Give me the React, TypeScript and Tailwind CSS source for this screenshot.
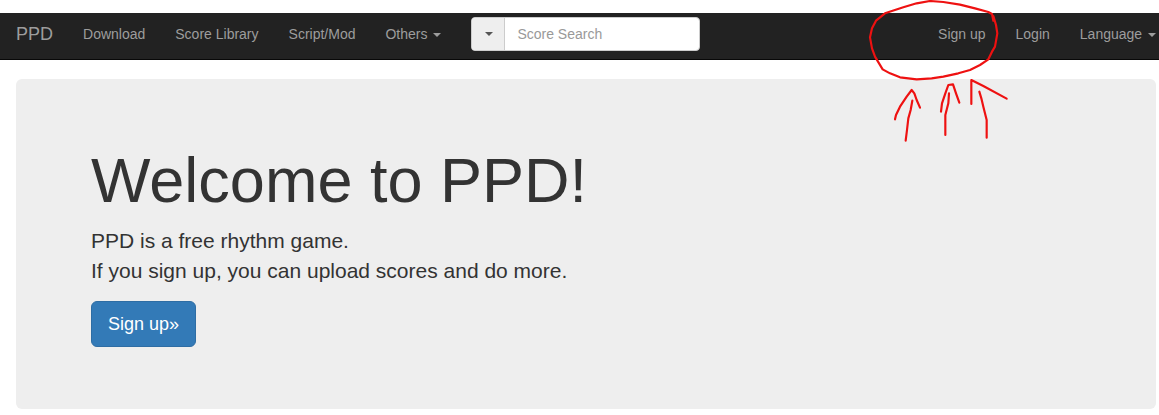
const links = ["Download", "Score Library", "Script/Mod"];

function Caret({ className }: { className: string }) {
  return <span className={`inline-block w-0 h-0 ml-[2px] align-middle border-t-4 border-x-4 border-x-transparent ${className}`} />;
}

function Annotation() {
  return (
    <svg
      className="absolute left-[860px] top-0 pointer-events-none"
      width="299"
      height="150"
      viewBox="0 0 897 450"
      fill="none"
      stroke="#ee1111"
      strokeWidth="6.5"
      strokeLinejoin="round"
      strokeLinecap="round"
    >
      <path d="M400 62 L396 42 L385 36 L345 25 L300 14 L250 6 L210 3 L170 10 L130 22 L75 40 L48 62 L36 85 L30 112 L36 145 L45 170 L68 208 L90 220 L120 232 L170 238 L215 235 L250 230 L295 220 L330 210 L360 195 L385 178 L396 155 L405 140 L412 100 L408 75 L400 48" />
      <path d="M105 358 L108 345 L120 320 L140 290 L155 270 L163 280 L170 300 L180 323" />
      <path d="M157 302 L152 330 L145 355 L141 390 L137 422" />
      <path d="M243 335 L246 310 L256 280 L265 255 L279 253 L288 280 L298 308" />
      <path d="M267 280 L265 310 L256 345 L256 405" />
      <path d="M334 312 L334 240 L370 258 L440 296" />
      <path d="M358 275 L364 295 L370 320 L380 360 L380 413" />
    </svg>
  );
}

export default function App() {
  return (
    <div className="relative w-[1159px] h-[415px] overflow-hidden bg-white pt-[13px] font-['Liberation_Sans',Arial,sans-serif] text-[14px] text-[#333]">
      <nav className="flex items-center h-[47px] pb-[4px] bg-[#222] border-b border-[#080808]">
        <a className="pl-4 pr-[15px] text-[18px] text-[#9d9d9d]">PPD</a>
        {links.map((l) => (
          <a key={l} className="px-[15px] text-[#9d9d9d]">{l}</a>
        ))}
        <a className="px-[15px] text-[#9d9d9d]">
          Others <Caret className="border-t-[#9d9d9d]" />
        </a>
        <div className="ml-[15px] flex w-[229px] h-[34px] rounded-[4px] overflow-hidden bg-white border border-[#ccc]">
          <div className="flex items-center justify-center w-[33px] bg-[#eee] border-r border-[#ccc]">
            <Caret className="ml-0 border-t-[#555]" />
          </div>
          <div className="flex items-center pl-3 text-[#999]">Score Search</div>
        </div>
        <div className="ml-auto flex items-center">
          <a className="px-[15px] text-[#9d9d9d]">Sign up</a>
          <a className="px-[15px] text-[#9d9d9d]">Login</a>
          <a className="pl-[15px] pr-[3px] text-[#9d9d9d]">
            Language <Caret className="border-t-[#9d9d9d]" />
          </a>
        </div>
      </nav>
      <main className="mt-[19px] ml-4 mr-[3px] h-[330px] rounded-[6px] bg-[#eee] pt-[67px] pl-[75px]">
        <h1 className="text-[63px] leading-[69px] text-[#333]">Welcome to PPD!</h1>
        <p className="mt-[11px] text-[21px] leading-[30px]">PPD is a free rhythm game.</p>
        <p className="text-[21px] leading-[30px]">If you sign up, you can upload scores and do more.</p>
        <button className="mt-[15px] block h-[46px] w-[105px] rounded-[6px] bg-[#337ab7] border border-[#2e6da4] text-[18px] text-white">
          Sign up»
        </button>
      </main>
      <Annotation />
    </div>
  );
}
